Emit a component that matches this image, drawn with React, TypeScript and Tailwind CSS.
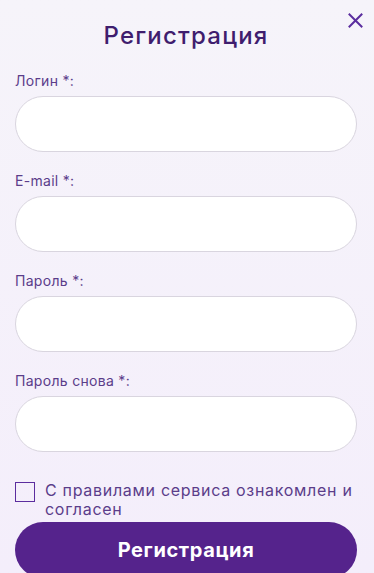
import React from "react";

const fields = ["Логин *:", "E-mail *:", "Пароль *:", "Пароль снова *:"];

export default function App() {
  return (
    <div
      className="relative w-[374px] h-[573px] overflow-hidden bg-gradient-to-b from-[#f6f4fa] to-[#f4eefb] pl-[15px] pr-[17px]"
      style={{ fontFamily: "Inter, 'Noto Sans', sans-serif" }}
    >
      <button className="absolute right-[11px] top-[13px] w-[15px] h-[15px] flex items-center justify-center">
        <svg width="15" height="15" viewBox="0 0 15 15" fill="none">
          <path d="M1.5 1.5 L13.5 13.5 M13.5 1.5 L1.5 13.5" stroke="#5b2d9e" strokeWidth="2" strokeLinecap="square" />
        </svg>
      </button>
      <h1 className="pt-[20px] text-center text-[24px] leading-[32px] font-medium tracking-[1.2px] text-[#3f1d6e]">
        Регистрация
      </h1>
      <div className="flex flex-col mt-[18px]">
        {fields.map((f) => (
          <div key={f} className="flex flex-col h-[100px]">
            <label className="text-[14px] leading-[20px] tracking-[0.3px] text-[#5b3d8a] pt-[1px]">{f}</label>
            <input
              className="mt-[5px] h-[56px] w-full rounded-full border border-[#d9d5df] bg-white outline-none"
              type="text"
            />
          </div>
        ))}
      </div>
      <div className="flex items-start gap-[10px] mt-[8px]">
        <div className="mt-[4px] w-[20px] h-[20px] shrink-0 border-[1.5px] border-[#5b2d9e] bg-transparent" />
        <span className="mt-[3px] text-[16px] leading-[19px] tracking-[0.7px] text-[#5b3d8a]">
          С правилами сервиса ознакомлен и согласен
        </span>
      </div>
      <button className="mt-[3px] w-full h-[56px] rounded-full bg-[#55238c] text-white text-[20px] tracking-[0.6px] font-bold">
        Регистрация
      </button>
    </div>
  );
}
